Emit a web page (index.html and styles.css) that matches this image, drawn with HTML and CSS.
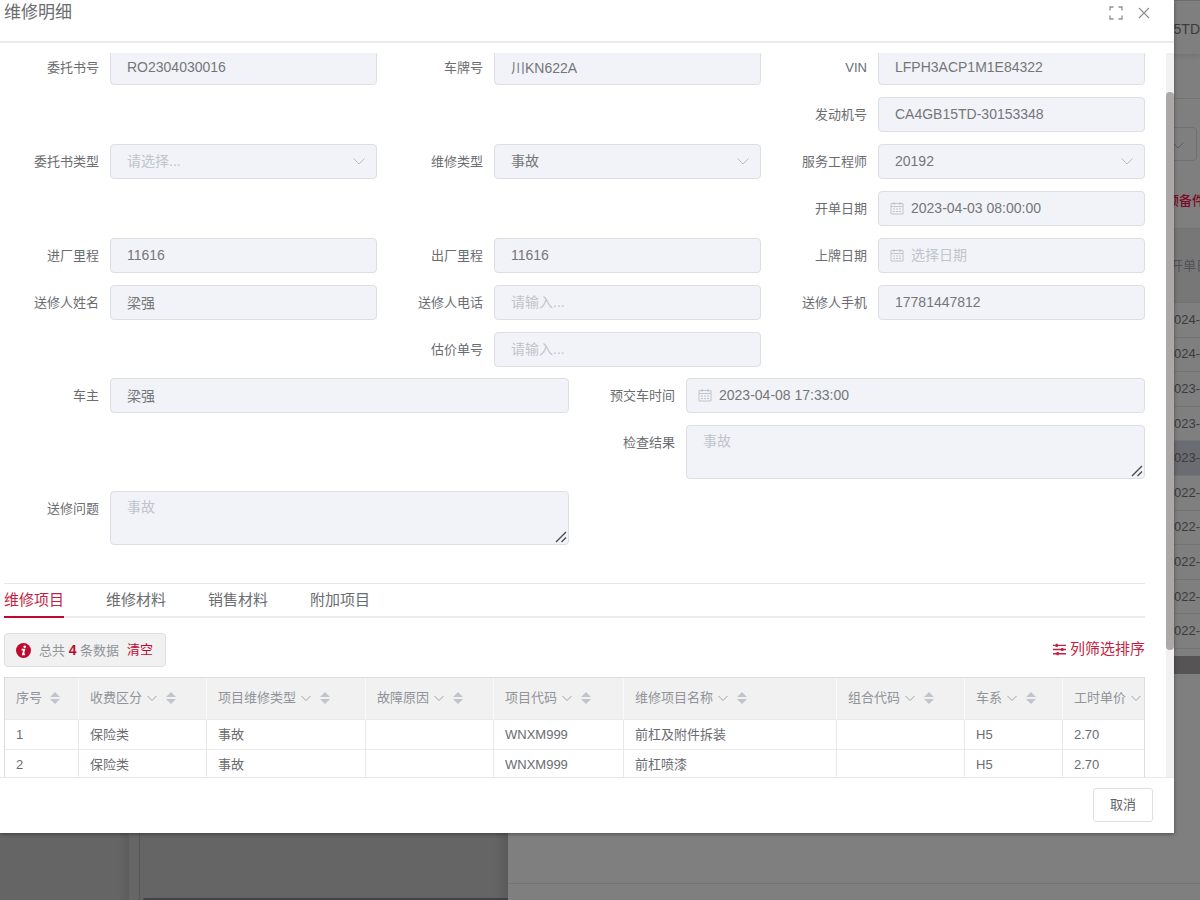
FILE: index.html
```html
<!DOCTYPE html>
<html lang="zh-CN">
<head>
<meta charset="utf-8">
<title>维修明细</title>
<link rel="stylesheet" href="styles.css">
</head>
<body>
<svg class="sprite" aria-hidden="true">
  <symbol id="chevron" viewBox="0 0 12 12"><path d="M.500 3.500L6 9l5.500-5.500" fill="none" stroke="currentColor"/></symbol>
  <symbol id="calendar" viewBox="0 0 14 14"><path d="M1 2.500h12v10.500H1zM1 5.500h12M4 1v3M10 1v3M3 8h2M6 8h2M9 8h2M3 10.500h2M6 10.500h2M9 10.500h2" fill="none" stroke="currentColor"/></symbol>
  <symbol id="grip" viewBox="0 0 12 12"><path d="M1 11L11 1M6.500 11L11 6.500" fill="none" stroke="#4a4a4a" stroke-width="1.400"/></symbol>
  <symbol id="sort" viewBox="0 0 10 12"><path d="M5 0l5 5H0zM5 12l5-5H0z" fill="#c0c4cc"/></symbol>
</svg>

<div class="page">
  <div class="page-nav"></div>
  <div class="page-main"></div>
  <div class="drawer">
    <div class="drawer-title">5TD</div>
    <div class="drawer-space"></div>
    <div class="drawer-filter"><span class="filter-box"><svg class="chevron"><use href="#chevron"/></svg></span></div>
    <div class="drawer-tools"><span class="edge-text">预备件</span></div>
    <div class="drawer-head"><span class="edge-text">开单日</span></div>
    <ul class="drawer-rows">
      <li>2024-</li>
      <li>2024-</li>
      <li>2023-</li>
      <li>2023-</li>
      <li class="current">2023-</li>
      <li>2022-</li>
      <li>2022-</li>
      <li>2022-</li>
      <li>2022-</li>
      <li>2022-</li>
    </ul>
    <div class="drawer-scroll"></div>
    <div class="drawer-rest"></div>
    <div class="drawer-foot"></div>
  </div>
</div>

<section class="dialog" role="dialog" aria-labelledby="dialog-title">
  <header class="dialog-header">
    <h1 id="dialog-title">维修明细</h1>
    <button class="icon-button" type="button" aria-label="全屏"><svg viewBox="0 0 14 14"><path d="M1 4.500V1h3.500M9.500 1H13v3.500M13 9.500V13H9.500M4.500 13H1V9.500" fill="none" stroke="currentColor" stroke-width="1.300"/></svg></button>
    <button class="icon-button" type="button" aria-label="关闭"><svg viewBox="0 0 14 14"><path d="M2 2l10 10M12 2L2 12" fill="none" stroke="currentColor" stroke-width="1.200"/></svg></button>
  </header>

  <div class="dialog-body">
    <div class="dialog-content">
      <form class="form">
        <div class="thirds">
          <div class="field"><label for="order">委托书号</label><input id="order" value="RO2304030016" disabled></div>
          <div class="field"><label for="plate">车牌号</label><input id="plate" value="川KN622A" disabled></div>
          <div class="field"><label for="vin">VIN</label><input id="vin" value="LFPH3ACP1M1E84322" disabled></div>

          <div class="field third-col"><label for="engine">发动机号</label><input id="engine" value="CA4GB15TD-30153348" disabled></div>

          <div class="field"><label for="otype">委托书类型</label><div class="control"><select id="otype" class="empty" disabled><option>请选择...</option></select><svg class="chevron"><use href="#chevron"/></svg></div></div>
          <div class="field"><label for="rtype">维修类型</label><div class="control"><select id="rtype" disabled><option>事故</option></select><svg class="chevron"><use href="#chevron"/></svg></div></div>
          <div class="field"><label for="advisor">服务工程师</label><div class="control"><select id="advisor" disabled><option>20192</option></select><svg class="chevron"><use href="#chevron"/></svg></div></div>

          <div class="field third-col"><label for="odate">开单日期</label><div class="control dated"><svg class="calendar"><use href="#calendar"/></svg><input id="odate" value="2023-04-03 08:00:00" disabled></div></div>

          <div class="field"><label for="min">进厂里程</label><input id="min" value="11616" disabled></div>
          <div class="field"><label for="mout">出厂里程</label><input id="mout" value="11616" disabled></div>
          <div class="field"><label for="ldate">上牌日期</label><div class="control dated"><svg class="calendar"><use href="#calendar"/></svg><input id="ldate" placeholder="选择日期" disabled></div></div>

          <div class="field"><label for="sender">送修人姓名</label><input id="sender" value="梁强" disabled></div>
          <div class="field"><label for="tel">送修人电话</label><input id="tel" placeholder="请输入..." disabled></div>
          <div class="field"><label for="mobile">送修人手机</label><input id="mobile" value="17781447812" disabled></div>

          <div class="field second-col"><label for="quote">估价单号</label><input id="quote" placeholder="请输入..." disabled></div>
        </div>
        <div class="halves">
          <div class="field"><label for="owner">车主</label><input id="owner" value="梁强" disabled></div>
          <div class="field"><label for="due">预交车时间</label><div class="control dated"><svg class="calendar"><use href="#calendar"/></svg><input id="due" value="2023-04-08 17:33:00" disabled></div></div>
          <div class="field second-col"><label for="result">检查结果</label><div class="control"><textarea id="result" placeholder="事故" disabled></textarea><svg class="grip"><use href="#grip"/></svg></div></div>
          <div class="field"><label for="issue">送修问题</label><div class="control"><textarea id="issue" placeholder="事故" disabled></textarea><svg class="grip"><use href="#grip"/></svg></div></div>
        </div>
      </form>

      <nav class="tabs">
        <a class="active" href="#items">维修项目</a>
        <a href="#parts">维修材料</a>
        <a href="#sales">销售材料</a>
        <a href="#extra">附加项目</a>
      </nav>

      <div class="toolbar">
        <div class="summary">
          <svg class="info" viewBox="0 0 16 16"><circle cx="8" cy="8" r="8" fill="#bf0a30"/><circle cx="9.300" cy="4" r="1.400" fill="#fff"/><path d="M6 7h2.800L7.400 12H9.500" fill="none" stroke="#fff" stroke-width="1.900"/></svg>
          <span>总共 <b>4</b> 条数据</span>
          <a href="#clear">清空</a>
        </div>
        <a class="columns" href="#columns"><svg viewBox="0 0 14 14"><path d="M0 2.500h14M0 7h14M0 11.500h14" stroke="currentColor" stroke-width="1.500"/><path d="M4 .8v3.400M10 5.300v3.400M5 9.800v3.400" stroke="currentColor" stroke-width="2.400"/></svg>列筛选排序</a>
      </div>

      <div class="table-wrap">
        <table>
          <colgroup><col class="w-index"><col class="w-std"><col class="w-type"><col class="w-std"><col class="w-code"><col class="w-name"><col class="w-std"><col class="w-series"><col class="w-std"></colgroup>
          <thead>
            <tr>
              <th><span>序号<svg class="sort index-sort"><use href="#sort"/></svg></span></th>
              <th><span>收费区分<svg class="filter"><use href="#chevron"/></svg><svg class="sort"><use href="#sort"/></svg></span></th>
              <th><span>项目维修类型<svg class="filter"><use href="#chevron"/></svg><svg class="sort"><use href="#sort"/></svg></span></th>
              <th><span>故障原因<svg class="filter"><use href="#chevron"/></svg><svg class="sort"><use href="#sort"/></svg></span></th>
              <th><span>项目代码<svg class="filter"><use href="#chevron"/></svg><svg class="sort"><use href="#sort"/></svg></span></th>
              <th><span>维修项目名称<svg class="filter"><use href="#chevron"/></svg><svg class="sort"><use href="#sort"/></svg></span></th>
              <th><span>组合代码<svg class="filter"><use href="#chevron"/></svg><svg class="sort"><use href="#sort"/></svg></span></th>
              <th><span>车系<svg class="filter"><use href="#chevron"/></svg><svg class="sort"><use href="#sort"/></svg></span></th>
              <th><span>工时单价<svg class="filter"><use href="#chevron"/></svg></span></th>
            </tr>
          </thead>
          <tbody>
            <tr><td>1</td><td>保险类</td><td>事故</td><td></td><td>WNXM999</td><td>前杠及附件拆装</td><td></td><td>H5</td><td>2.70</td></tr>
            <tr><td>2</td><td>保险类</td><td>事故</td><td></td><td>WNXM999</td><td>前杠喷漆</td><td></td><td>H5</td><td>2.70</td></tr>
          </tbody>
        </table>
      </div>
    </div>
    <div class="scrollbar"><div class="thumb"></div></div>
  </div>

  <footer class="dialog-footer"><button class="cancel" type="button">取消</button></footer>
</section>
</body>
</html>
```
FILE: styles.css
```css
* { box-sizing: border-box; }
body {
  margin: 0;
  height: 100vh;
  overflow: hidden;
  position: relative;
  font: 13px/20px "Liberation Sans", "Noto Sans CJK SC", sans-serif;
  color: #6a6c70;
}
a { color: inherit; text-decoration: none; }
button, input, select, textarea { font: inherit; margin: 0; }
svg { flex: none; display: block; }
.sprite { position: absolute; width: 0; height: 0; }

/* dimmed page */
.page { display: flex; height: 100%; background: #656565; }
.page-nav { width: 140px; border-right: 1px solid #575757; background: linear-gradient(90deg, #656565 118px, #5d5d5d 129px, #666 129px); }
.page-main { width: 368px; padding-left: 3px; display: flex; align-items: flex-end; background: linear-gradient(90deg, #656565 354px, #5a5a5a); }
.page-main::after { content: ""; flex: 1; height: 2px; background: #424043; border-radius: 3px 0 0 0; }
.drawer { flex: 1; min-width: 0; display: flex; flex-direction: column; background: #7f7f7f; color: #3b3b3d; }
.drawer-title { height: 54px; padding-top: 18px; text-align: right; font-size: 14px; border-top: 1px solid #6c6c74; box-shadow: 0 2px 6px rgba(0, 0, 0, .1); }
.drawer-space { height: 45px; border-bottom: 1px solid #737373; }
.drawer-filter { height: 77px; padding: 28px 3px 0 0; display: flex; justify-content: flex-end; }
.filter-box { position: relative; width: 200px; height: 34px; border: 1px solid #707072; border-radius: 4px; color: #606266; }
.drawer-tools { height: 53px; padding: 15px 0; display: flex; justify-content: flex-end; color: #7b0a28; font-weight: 500; border-bottom: 1px solid #727272; }
.edge-text { width: 30px; white-space: nowrap; }
.drawer-tools .edge-text { width: 34px; }
.drawer-head { height: 74px; display: flex; align-items: center; justify-content: flex-end; background: #777; color: #505256; border-bottom: 1px solid #727272; }
.drawer-rows { flex: 0 0 346px; margin: 0; padding: 0; list-style: none; display: flex; flex-direction: column; }
.drawer-rows li { flex: 1; display: flex; align-items: center; justify-content: flex-end; border-bottom: 1px solid #747474; }
.drawer-rows .current { background: #6b6c71; }
.drawer-scroll { height: 18px; margin-top: 7px; background: #565454; }
.drawer-rest { flex: 1; border-bottom: 1px solid #757575; }
.drawer-foot { height: 16px; }

/* dialog */
.dialog { position: absolute; inset: 0 26px 67px 0; display: flex; flex-direction: column; background: #fff; box-shadow: 0 1px 4px rgba(0, 0, 0, .4); }
.dialog-header { height: 43px; padding: 0 23px 15px 4px; display: flex; align-items: center; gap: 14px; border-bottom: 2px solid #ebebeb; }
.dialog-header h1 { flex: 1; margin: 0; font-size: 17px; font-weight: 400; line-height: 24px; }
.icon-button { width: 14px; height: 14px; padding: 0; border: 0; background: none; color: #8d9095; }
.icon-button svg { width: 14px; height: 14px; }
.dialog-body { flex: 1; min-height: 0; margin-top: 10px; display: flex; overflow: hidden; }
.dialog-content { flex: 1; min-width: 0; margin-top: -3px; padding: 0 21px 0 4px; }
.scrollbar { width: 8px; padding: 39px 0 127px; display: flex; background: #f1f1f1; }
.thumb { flex: 1; border-radius: 4px; background: #aca8a8; }
.dialog-footer { height: 56px; padding: 10px 21px; display: flex; justify-content: flex-end; border-top: 1px solid #e8e8e8; }
.cancel { width: 60px; height: 34px; padding: 0; border: 1px solid #dcdfe6; border-radius: 3px; background: #fff; color: #606266; }

/* form */
.form { margin-left: -11px; display: flex; flex-direction: column; gap: 11px; }
.thirds { display: grid; grid-template-columns: repeat(3, minmax(0, 1fr)); gap: 12px 0; }
.halves { display: grid; grid-template-columns: repeat(2, minmax(0, 1fr)); gap: 12px 0; }
.second-col { grid-column: 2; }
.third-col { grid-column: 3; }
.field { display: flex; align-items: flex-start; }
.field label { flex: 0 0 117px; padding-right: 11px; line-height: 35px; text-align: right; }
.control { position: relative; flex: 1; min-width: 0; display: flex; }
input, select, textarea {
  flex: 1; min-width: 0; width: 100%; height: 35px; padding: 0 16px 1px;
  border: 1px solid #dcdee2; border-radius: 4px; background: #f2f3f8;
  color: #757678; font-size: 14px; opacity: 1; appearance: none;
}
textarea { height: 54px; padding: 5px 16px; resize: none; line-height: 20px; display: block; }
::placeholder { color: #c0c4cc; opacity: 1; }
select.empty { color: #c0c4cc; }
.dated input { padding-left: 32px; }
.chevron { position: absolute; right: 12px; top: 11px; width: 12px; height: 12px; color: #b8bcc4; }
.filter-box .chevron { color: #5c5e62; }
.calendar { position: absolute; left: 12px; top: 10px; width: 14px; height: 14px; color: #c0c4cc; }
.grip { position: absolute; right: 2px; bottom: 2px; width: 12px; height: 12px; }

/* tabs */
.tabs { margin-top: 38px; display: flex; gap: 42px; border-top: 1px solid #e6e6e6; border-bottom: 2px solid #ebebeb; font-size: 15px; }
.tabs a { height: 34px; margin-bottom: -2px; line-height: 32px; border-bottom: 2px solid transparent; }
.tabs .active { color: #c41f42; border-color: #bf0a30; }

.toolbar { margin: 15px 0 10px; display: flex; align-items: center; justify-content: space-between; }
.summary { height: 34px; padding: 0 12px 0 11px; display: flex; align-items: center; gap: 8px; border: 1px solid #dfdfdf; border-radius: 4px; background: #f1f1f1; color: #909399; }
.summary b, .summary a { color: #bf0a30; }
.summary b { font-size: 14px; }
.info { width: 15px; height: 15px; }
.columns { display: flex; align-items: center; gap: 4px; padding-bottom: 2px; color: #c41f42; font-size: 15px; }
.columns svg { width: 13px; height: 13px; }

/* table */
.table-wrap { overflow: hidden; border: 1px solid #dcdcdc; border-bottom: 0; }
table { width: 1186px; table-layout: fixed; border-collapse: separate; border-spacing: 0; }
.w-index { width: 74px; }
.w-std { width: 128px; }
.w-type { width: 159px; }
.w-code { width: 130px; }
.w-name { width: 213px; }
.w-series { width: 98px; }
th, td { padding: 0 0 0 11px; text-align: left; font-weight: 400; border-right: 1px solid #e8e8e8; border-bottom: 1px solid #ebebeb; }
th { height: 42px; padding-bottom: 1px; background: #f1f1f1; color: #909399; border-right-color: #fafafa; }
td { height: 30px; }
th span { display: flex; align-items: center; white-space: nowrap; }
.filter { width: 10px; height: 10px; margin-left: 5px; }
.sort { width: 10px; height: 12px; margin-left: 9px; }
.index-sort { margin-left: 8px; }
```
